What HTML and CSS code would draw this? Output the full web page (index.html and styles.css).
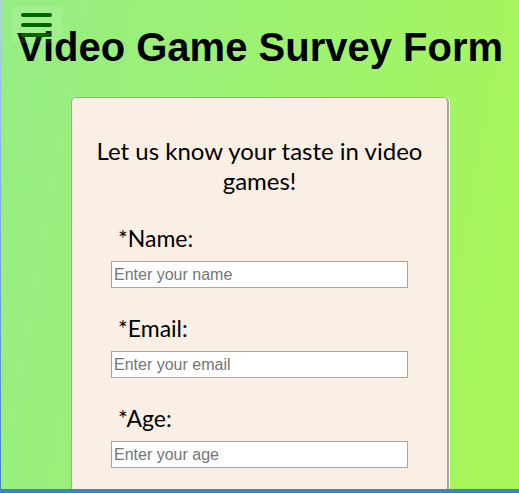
FILE: index.html
```html
<!DOCTYPE html>
<html>
<head>
<meta charset="utf-8">
<link rel="stylesheet" href="styles.css">
</head>
<body>
<div class="page">
  <button class="menu" aria-label="menu"><span class="bar"></span><span class="bar"></span><span class="bar"></span></button>
  <h1 class="title">Video Game Survey Form</h1>
  <form class="card">
    <p class="intro">Let us know your taste in video games!</p>
    <div class="field">
      <label class="label" for="name">*Name:</label>
      <input class="input" id="name" type="text" placeholder="Enter your name">
    </div>
    <div class="field">
      <label class="label" for="email">*Email:</label>
      <input class="input" id="email" type="email" placeholder="Enter your email">
    </div>
    <div class="field">
      <label class="label" for="age">*Age:</label>
      <input class="input" id="age" type="number" placeholder="Enter your age">
    </div>
  </form>
</div>
</body>
</html>
```

FILE: styles.css
```css
html {
  background: linear-gradient(to bottom, #b4cdf0, #3a84c4);
  height: 100%;
}
body {
  margin: 0;
  height: 100%;
  overflow: hidden;
}
.page {
  position: relative;
  margin-left: 1px;
  height: 489px;
  overflow: hidden;
  background: linear-gradient(100deg, #96ed84 0%, #9ef270 50%, #a8f658 100%);
}
.menu {
  position: absolute;
  left: 11px;
  top: 6px;
  width: 49px;
  height: 37px;
  padding: 7px 0 0 9px;
  border: none;
  background: rgba(255, 255, 255, 0.1);
  display: flex;
  flex-direction: column;
  gap: 6px;
  box-sizing: border-box;
}
.bar {
  display: block;
  width: 31px;
  height: 4px;
  border-radius: 2px;
  background: #006400;
}
.title {
  margin: 0;
  padding-top: 24px;
  font-family: "Liberation Sans", Arial, sans-serif;
  font-weight: bold;
  font-size: 40px;
  line-height: 46px;
  text-align: center;
  color: #000;
}
.card {
  box-sizing: border-box;
  width: 378px;
  margin: 27px auto 0;
  padding: 38px 0 40px;
  background: #faefe5;
  border: 1px solid #a4a4a4;
  border-right-width: 2px;
  border-radius: 5px;
  box-shadow: 1px 0 0 #ffffff;
}
.intro {
  margin: 0 0 29px;
  padding: 0 20px;
  font-family: Lato, "Open Sans", sans-serif;
  font-size: 24px;
  line-height: 30px;
  text-align: center;
  color: #000;
}
.field {
  width: 297px;
  margin: 0 auto 27px;
  display: flex;
  flex-direction: column;
  gap: 10px;
}
.label {
  padding-left: 7px;
  font-family: Lato, "Open Sans", sans-serif;
  font-size: 23px;
  line-height: 26px;
  color: #000;
}
.input {
  box-sizing: border-box;
  width: 297px;
  height: 27px;
  margin: 0;
  padding: 1px 2px;
  border: 1px solid #a6a6a6;
  border-radius: 0;
  background: #fff;
  font-family: "Liberation Sans", Arial, sans-serif;
  font-size: 16px;
  color: #000;
  outline: none;
}
.input::placeholder {
  color: #757575;
}
```
